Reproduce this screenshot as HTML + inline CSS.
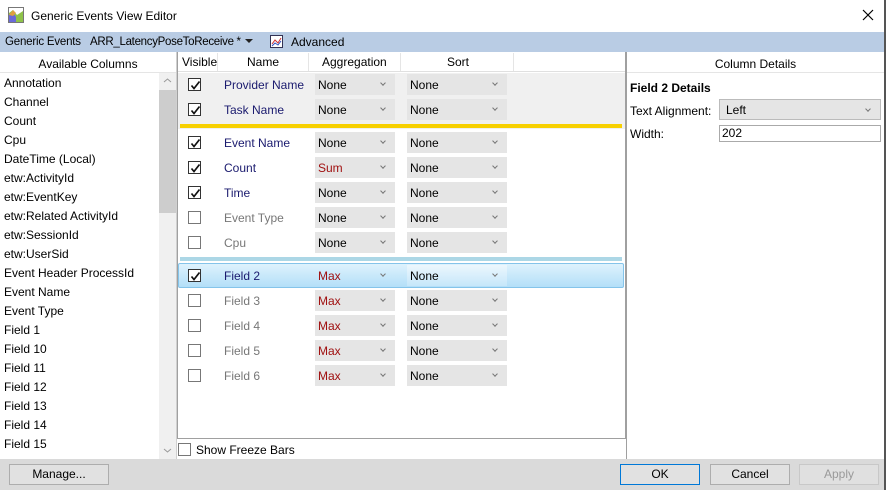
<!DOCTYPE html>
<html><head><meta charset="utf-8"><style>
*{box-sizing:border-box;margin:0;padding:0}
body{width:886px;height:490px;position:relative;overflow:hidden;background:#fff;font-family:"Liberation Sans",sans-serif;font-size:12px;color:#000}
.a{position:absolute}
.t{position:absolute;white-space:nowrap;line-height:14px}
.cb{position:absolute;width:13px;height:13px;border:1px solid #333;background:#fff}
.cb.g{border-color:#777}
.cb svg{position:absolute;left:1px;top:1px}
.dd{position:absolute;height:21px;background:#e5e5e5;padding-left:3px;padding-top:1px;line-height:21px;font-size:12px}
.dd:after{content:"";position:absolute;right:10px;top:7px;width:3px;height:3px;border-right:1px solid #777;border-bottom:1px solid #777;transform:rotate(45deg)}
.n{color:#1a1a6e}.gr{color:#777}.r{color:#a01010}
.btn{position:absolute;height:21px;border:1px solid #adadad;background:#e1e1e1;text-align:center;line-height:19px}
</style></head><body>
<svg class="a" style="left:8px;top:7px" width="16" height="16"><rect x="0.5" y="0.5" width="15" height="15" fill="#fff" stroke="#777"/><polygon points="1,15 1,6 5,3 9,8 15,4 15,15" fill="#8fc34a"/><polygon points="1,15 1,8 5,5 8,10 8,15" fill="#6a6ad8"/><polygon points="1,8 5,3 8,6 5,9" fill="#e0a040"/></svg>
<div class="t" style="left:31px;top:9px;font-size:12px">Generic Events View Editor</div>
<svg class="a" style="left:862px;top:9px" width="12" height="12"><path d="M1 1L11 11M11 1L1 11" stroke="#000" stroke-width="1.2"/></svg>
<div class="a" style="left:884px;top:0;width:2px;height:490px;background:#555"></div>
<div class="a" style="left:0;top:32px;width:884px;height:20px;background:#b9cce4"></div>
<div class="t" style="left:5px;top:35px;font-size:11.5px;letter-spacing:-0.2px">Generic Events</div>
<div class="t" style="left:90px;top:35px;font-size:11.5px;letter-spacing:-0.3px">ARR_LatencyPoseToReceive *</div>
<svg class="a" style="left:245px;top:39px" width="9" height="5"><polygon points="0,0 8,0 4,4" fill="#222"/></svg>
<svg class="a" style="left:270px;top:35px" width="13" height="13"><rect x="0.5" y="0.5" width="12" height="12" fill="#fff" stroke="#335"/><path d="M2 9L5 5L8 8L11 3" stroke="#d03030" fill="none"/><path d="M2 11L5 8L8 10L11 6" stroke="#3050c0" fill="none"/></svg>
<div class="t" style="left:291px;top:35px">Advanced</div>
<div class="t" style="left:0;top:57px;width:176px;text-align:center">Available Columns</div>
<div class="a" style="left:0;top:72px;width:176px;height:1px;background:#e5e5e5"></div>
<div class="a" style="left:159px;top:73px;width:17px;height:386px;background:#f0f0f0"></div>
<div class="a" style="left:159px;top:90px;width:17px;height:123px;background:#cdcdcd"></div>
<svg class="a" style="left:163px;top:78px" width="9" height="5"><path d="M1 4L4.5 1L8 4" stroke="#999" fill="none"/></svg>
<svg class="a" style="left:163px;top:448px" width="9" height="5"><path d="M1 1L4.5 4L8 1" stroke="#999" fill="none"/></svg>
<div class="a" style="left:176px;top:52px;width:1px;height:407px;background:#d0d0d0"></div>
<div class="t" style="left:4px;top:76px">Annotation</div>
<div class="t" style="left:4px;top:95px">Channel</div>
<div class="t" style="left:4px;top:114px">Count</div>
<div class="t" style="left:4px;top:133px">Cpu</div>
<div class="t" style="left:4px;top:152px">DateTime (Local)</div>
<div class="t" style="left:4px;top:171px">etw:ActivityId</div>
<div class="t" style="left:4px;top:190px">etw:EventKey</div>
<div class="t" style="left:4px;top:209px">etw:Related ActivityId</div>
<div class="t" style="left:4px;top:228px">etw:SessionId</div>
<div class="t" style="left:4px;top:247px">etw:UserSid</div>
<div class="t" style="left:4px;top:266px">Event Header ProcessId</div>
<div class="t" style="left:4px;top:285px">Event Name</div>
<div class="t" style="left:4px;top:304px">Event Type</div>
<div class="t" style="left:4px;top:323px">Field 1</div>
<div class="t" style="left:4px;top:342px">Field 10</div>
<div class="t" style="left:4px;top:361px">Field 11</div>
<div class="t" style="left:4px;top:380px">Field 12</div>
<div class="t" style="left:4px;top:399px">Field 13</div>
<div class="t" style="left:4px;top:418px">Field 14</div>
<div class="t" style="left:4px;top:437px">Field 15</div>
<div class="a" style="left:177px;top:52px;width:449px;height:387px;border:1px solid #a0a0a0;border-top:none"></div>
<div class="a" style="left:178px;top:52px;width:447px;height:20px;background:#fff;border-bottom:1px solid #e0e0e0"></div>
<div class="a" style="left:217px;top:53px;width:1px;height:18px;background:#e5e5e5"></div>
<div class="a" style="left:308px;top:53px;width:1px;height:18px;background:#e5e5e5"></div>
<div class="a" style="left:400px;top:53px;width:1px;height:18px;background:#e5e5e5"></div>
<div class="a" style="left:513px;top:53px;width:1px;height:18px;background:#e5e5e5"></div>
<div class="t" style="left:182px;top:55px">Visible</div>
<div class="t" style="left:247px;top:55px">Name</div>
<div class="t" style="left:322px;top:55px">Aggregation</div>
<div class="t" style="left:447px;top:55px">Sort</div>
<div class="a" style="left:178px;top:73px;width:447px;height:56px;background:#f0f0f0"></div>
<div class="a" style="left:180px;top:124px;width:442px;height:4px;background:#f7d000"></div>
<div class="a" style="left:180px;top:257px;width:442px;height:4px;background:#acd7e6"></div>
<div class="a" style="left:178px;top:263px;width:446px;height:25px;border:1px solid #84c4ea;border-radius:2px;background:linear-gradient(#def2fd,#b3dff8)"></div>

<div class="cb" style="left:188px;top:78px"><svg width="11" height="11"><path d="M1.5 5.5L4 8.5L9.5 1.5" stroke="#111" stroke-width="1.7" fill="none"/></svg></div>
<div class="t n" style="left:224px;top:78px">Provider Name</div>
<div class="dd" style="left:315px;top:74px;width:80px">None</div><div class="dd" style="left:407px;top:74px;width:100px">None</div>

<div class="cb" style="left:188px;top:103px"><svg width="11" height="11"><path d="M1.5 5.5L4 8.5L9.5 1.5" stroke="#111" stroke-width="1.7" fill="none"/></svg></div>
<div class="t n" style="left:224px;top:103px">Task Name</div>
<div class="dd" style="left:315px;top:99px;width:80px">None</div><div class="dd" style="left:407px;top:99px;width:100px">None</div>

<div class="cb" style="left:188px;top:136px"><svg width="11" height="11"><path d="M1.5 5.5L4 8.5L9.5 1.5" stroke="#111" stroke-width="1.7" fill="none"/></svg></div>
<div class="t n" style="left:224px;top:136px">Event Name</div>
<div class="dd" style="left:315px;top:132px;width:80px">None</div><div class="dd" style="left:407px;top:132px;width:100px">None</div>

<div class="cb" style="left:188px;top:161px"><svg width="11" height="11"><path d="M1.5 5.5L4 8.5L9.5 1.5" stroke="#111" stroke-width="1.7" fill="none"/></svg></div>
<div class="t n" style="left:224px;top:161px">Count</div>
<div class="dd r" style="left:315px;top:157px;width:80px">Sum</div><div class="dd" style="left:407px;top:157px;width:100px">None</div>

<div class="cb" style="left:188px;top:186px"><svg width="11" height="11"><path d="M1.5 5.5L4 8.5L9.5 1.5" stroke="#111" stroke-width="1.7" fill="none"/></svg></div>
<div class="t n" style="left:224px;top:186px">Time</div>
<div class="dd" style="left:315px;top:182px;width:80px">None</div><div class="dd" style="left:407px;top:182px;width:100px">None</div>

<div class="cb g" style="left:188px;top:211px"></div>
<div class="t gr" style="left:224px;top:211px">Event Type</div>
<div class="dd" style="left:315px;top:207px;width:80px">None</div><div class="dd" style="left:407px;top:207px;width:100px">None</div>

<div class="cb g" style="left:188px;top:236px"></div>
<div class="t gr" style="left:224px;top:236px">Cpu</div>
<div class="dd" style="left:315px;top:232px;width:80px">None</div><div class="dd" style="left:407px;top:232px;width:100px">None</div>

<div class="cb" style="left:188px;top:269px"><svg width="11" height="11"><path d="M1.5 5.5L4 8.5L9.5 1.5" stroke="#111" stroke-width="1.7" fill="none"/></svg></div>
<div class="t n" style="left:224px;top:269px">Field 2</div>
<div class="dd r" style="left:315px;top:265px;width:80px;background:transparent">Max</div><div class="dd" style="left:407px;top:265px;width:100px;background:linear-gradient(#ecf7fd,#c6e7fa)">None</div>

<div class="cb g" style="left:188px;top:294px"></div>
<div class="t gr" style="left:224px;top:294px">Field 3</div>
<div class="dd r" style="left:315px;top:290px;width:80px">Max</div><div class="dd" style="left:407px;top:290px;width:100px">None</div>

<div class="cb g" style="left:188px;top:319px"></div>
<div class="t gr" style="left:224px;top:319px">Field 4</div>
<div class="dd r" style="left:315px;top:315px;width:80px">Max</div><div class="dd" style="left:407px;top:315px;width:100px">None</div>

<div class="cb g" style="left:188px;top:344px"></div>
<div class="t gr" style="left:224px;top:344px">Field 5</div>
<div class="dd r" style="left:315px;top:340px;width:80px">Max</div><div class="dd" style="left:407px;top:340px;width:100px">None</div>

<div class="cb g" style="left:188px;top:369px"></div>
<div class="t gr" style="left:224px;top:369px">Field 6</div>
<div class="dd r" style="left:315px;top:365px;width:80px">Max</div><div class="dd" style="left:407px;top:365px;width:100px">None</div>

<div class="cb g" style="left:178px;top:443px"></div>
<div class="t" style="left:196px;top:443px">Show Freeze Bars</div>
<div class="a" style="left:626px;top:52px;width:1px;height:407px;background:#a0a0a0"></div>
<div class="t" style="left:627px;top:57px;width:257px;text-align:center">Column Details</div>
<div class="a" style="left:627px;top:72px;width:257px;height:1px;background:#e5e5e5"></div>
<div class="t" style="left:630px;top:81px;font-weight:bold">Field 2 Details</div>
<div class="t" style="left:630px;top:104px">Text Alignment:</div>
<div class="dd" style="left:719px;top:99px;width:162px;border:1px solid #bbb;padding-left:6px;line-height:19px">Left</div>
<div class="t" style="left:630px;top:127px">Width:</div>
<div class="a" style="left:719px;top:125px;width:162px;height:17px;border:1px solid #aaa;padding-left:2px;line-height:15px">202</div>
<div class="a" style="left:0;top:459px;width:884px;height:31px;background:#dadada"></div>
<div class="btn" style="left:9px;top:464px;width:100px">Manage...</div>
<div class="btn" style="left:620px;top:464px;width:80px;border-color:#0078d7">OK</div>
<div class="btn" style="left:710px;top:464px;width:80px">Cancel</div>
<div class="btn" style="left:799px;top:464px;width:80px;color:#999;border-color:#c8c8c8;background:#e0e0e0">Apply</div>
</body></html>
